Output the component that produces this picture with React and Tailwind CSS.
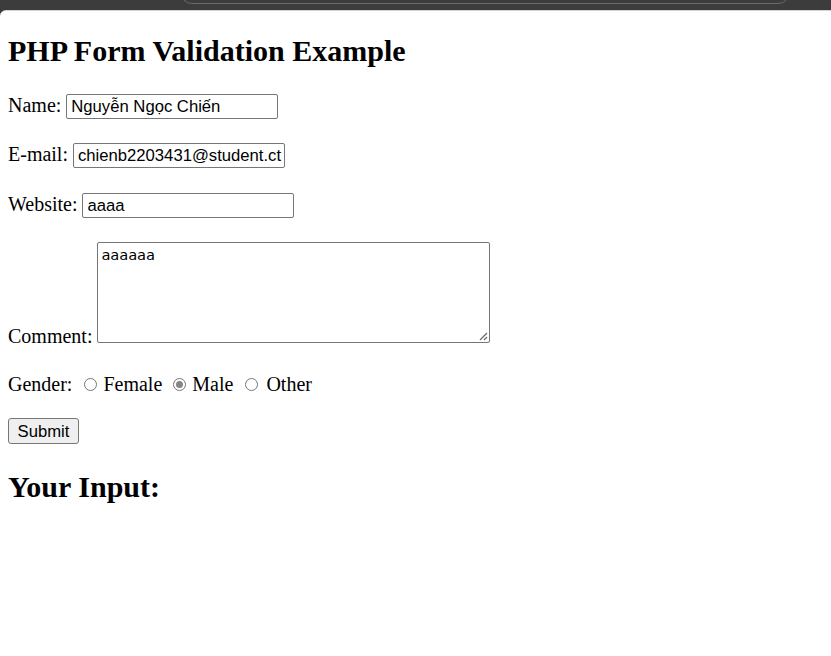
import React from "react";

const serif = { fontFamily: '"Liberation Serif", "Times New Roman", serif' };
const sans = { fontFamily: '"Liberation Sans", Arial, sans-serif' };
const mono = { fontFamily: '"DejaVu Sans Mono", Consolas, monospace' };

function TextBox({ value, width }) {
  return (
    <div
      className="h-[25px] border border-[#767676] bg-white flex items-center px-[4px] overflow-hidden whitespace-nowrap text-[16.67px] leading-[19px] text-black rounded-[2px]"
      style={{ ...sans, width }}
    >
      <span>{value}</span>
    </div>
  );
}

function Radio({ checked }) {
  return (
    <span className="inline-flex w-[13px] h-[13px] rounded-full border border-[#767676] bg-white items-center justify-center">
      {checked ? <span className="w-[7px] h-[7px] rounded-full bg-[#858585]" /> : null}
    </span>
  );
}

export default function App() {
  return (
    <div className="min-h-screen bg-[#3c3c3c] flex flex-col">
      <div className="h-[10px] overflow-hidden shrink-0">
        <div className="-mt-[20px] ml-[180px] w-[610px] h-[24px] rounded-[12px] border border-[#6a6a6a]" />
      </div>
      <div className="flex-1 bg-white rounded-tl-[6px] border-t border-[#d4d4d4] pl-[8px] text-black" style={serif}>
        <h2 className="mt-[23px] mb-[26px] text-[30px] leading-[34px] font-bold">PHP Form Validation Example</h2>

        <div className="flex items-baseline text-[20px] leading-[23px]">
          <span className="mr-[5px]">Name:</span>
          <TextBox value="Nguyễn Ngọc Chiến" width="212px" />
        </div>

        <div className="flex items-baseline text-[20px] leading-[23px] mt-[24px]">
          <span className="mr-[5px]">E-mail:</span>
          <TextBox value="chienb2203431@student.ct" width="212px" />
        </div>

        <div className="flex items-baseline text-[20px] leading-[23px] mt-[25px]">
          <span className="mr-[5px]">Website:</span>
          <TextBox value="aaaa" width="212px" />
        </div>

        <div className="flex items-end text-[20px] leading-[14px] mt-[24px]">
          <span className="mr-[5px]">Comment:</span>
          <div className="relative w-[393px] h-[101px] border border-[#767676] bg-white rounded-[2px] px-[3px] py-[3px]">
            <div className="text-[14.8px] leading-[18px] text-black" style={mono}>aaaaaa</div>
            <svg className="absolute right-[1px] bottom-[1px]" width="10" height="10" viewBox="0 0 10 10">
              <line x1="2" y1="9" x2="9" y2="2" stroke="#6b6b6b" strokeWidth="1.2" />
              <line x1="6" y1="9" x2="9" y2="6" stroke="#6b6b6b" strokeWidth="1.2" />
            </svg>
          </div>
        </div>

        <div className="flex items-baseline text-[20px] leading-[23px] mt-[30px]">
          <span>Gender:</span>
          <span className="ml-[12px] mr-[6px] flex self-start mt-[5px]"><Radio /></span>
          <span>Female</span>
          <span className="ml-[11px] mr-[6px] flex self-start mt-[5px]"><Radio checked /></span>
          <span>Male</span>
          <span className="ml-[12px] mr-[8px] flex self-start mt-[5px]"><Radio /></span>
          <span>Other</span>
        </div>

        <div className="mt-[22px]">
          <button
            type="button"
            className="w-[71px] h-[26px] bg-[#efefef] border border-[#767676] rounded-[3px] text-[16.67px] leading-[19px] text-black"
            style={sans}
          >
            Submit
          </button>
        </div>

        <h2 className="mt-[26px] text-[30px] leading-[34px] font-bold">Your Input:</h2>
      </div>
    </div>
  );
}
